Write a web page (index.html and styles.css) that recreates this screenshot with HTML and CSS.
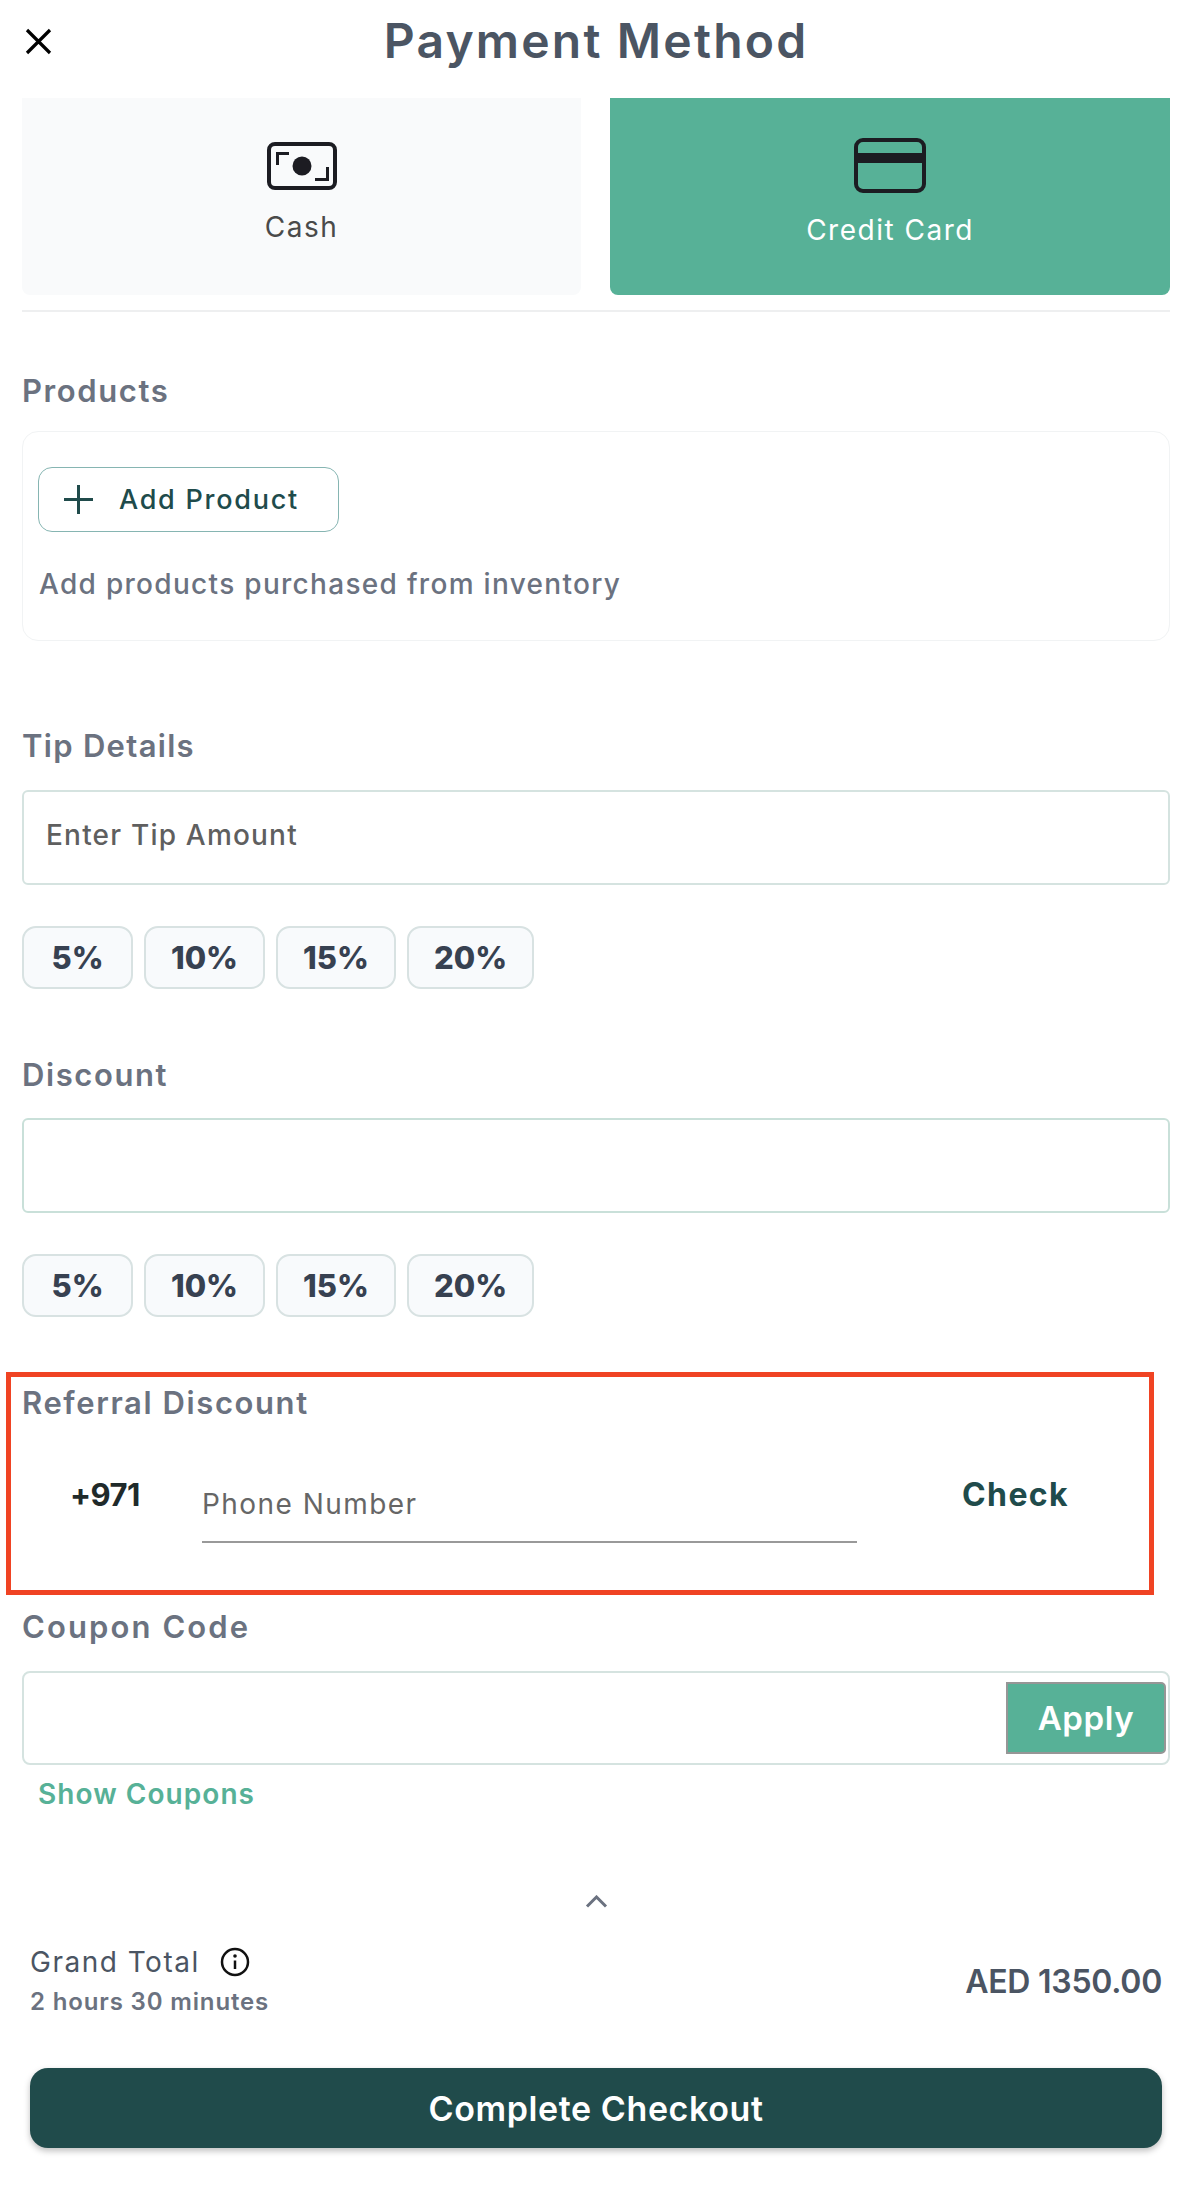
FILE: index.html
```html
<!DOCTYPE html>
<html lang="en">
  <head>
    <meta charset="UTF-8" />
    <title>Payment Method</title>
    <link rel="stylesheet" href="styles.css">
  </head>
  <body>
    <div class="page">
      <div class="top-bar">
        <svg class="close-icon" viewBox="0 0 27 27"><path d="M2 2 L25 25 M25 2 L2 25" /></svg>
        <h1>Payment Method</h1>
      </div>

      <div class="pay-types">
        <div class="pay-type">
          <svg class="cash-icon" viewBox="0 0 70 48">
            <rect x="2" y="2" width="66" height="44" rx="6" />
            <polyline points="22,11.5 10.5,11.5 10.5,23" />
            <polyline points="48,37.5 60.5,37.5 60.5,25" />
            <circle class="solid" cx="35" cy="24" r="9.5" />
          </svg>
          <span>Cash</span>
        </div>
        <div class="pay-type active">
          <svg class="card-icon" viewBox="0 0 72 55">
            <rect x="2" y="2" width="68" height="51" rx="7" />
            <rect class="solid" x="2" y="15" width="68" height="10" />
          </svg>
          <span>Credit Card</span>
        </div>
      </div>
      <div class="divider"></div>

      <h2 class="label products-label">Products</h2>
      <div class="products-box">
        <button class="add-product">
          <svg class="plus-icon" viewBox="0 0 29 29"><path d="M14.5 0 V29 M0 14.5 H29" /></svg>
          Add Product
        </button>
        <p class="helper">Add products purchased from inventory</p>
      </div>

      <h2 class="label tip-label">Tip Details</h2>
      <input class="text-input" type="text" placeholder="Enter Tip Amount" />
      <div class="chips">
        <button class="chip chip-5">5%</button>
        <button class="chip chip-10">10%</button>
        <button class="chip chip-15">15%</button>
        <button class="chip chip-20">20%</button>
      </div>

      <h2 class="label discount-label">Discount</h2>
      <input class="text-input discount-input" type="text" />
      <div class="chips">
        <button class="chip chip-5">5%</button>
        <button class="chip chip-10">10%</button>
        <button class="chip chip-15">15%</button>
        <button class="chip chip-20">20%</button>
      </div>

      <div class="referral">
        <h2 class="label">Referral Discount</h2>
        <div class="referral-row">
          <span class="dial-code">+971</span>
          <input class="phone-input" type="text" placeholder="Phone Number" />
          <span class="check">Check</span>
        </div>
      </div>

      <h2 class="label coupon-label">Coupon Code</h2>
      <div class="coupon-box">
        <input class="coupon-input" type="text" />
        <button class="apply">Apply</button>
      </div>
      <a class="show-coupons">Show Coupons</a>

      <div class="summary">
        <svg class="chevron" viewBox="0 0 23 13"><path d="M2 11.5 L11.5 2 L21 11.5" /></svg>
        <div class="total-row">
          <div>
            <div class="grand-total">
              Grand Total
              <svg class="info-icon" viewBox="0 0 30 30">
                <circle cx="15" cy="15" r="13" />
                <path d="M15 13.5 V22" />
                <circle class="solid" cx="15" cy="9" r="1.8" />
              </svg>
            </div>
            <div class="duration">2 hours 30 minutes</div>
          </div>
          <div class="amount">AED 1350.00</div>
        </div>
        <button class="checkout">Complete Checkout</button>
      </div>
    </div>
  </body>
</html>
```

FILE: styles.css
```css
* {
  padding: 0;
  margin: 0;
  box-sizing: border-box;
}
body {
  background: #fff;
  font-family: Inter, "Noto Sans", sans-serif;
}
button,
input {
  font-family: inherit;
}
svg {
  display: block;
  fill: none;
}
.page {
  width: 1202px;
  padding: 0 32px 44px 22px;
}

/* header */
.top-bar {
  height: 98px;
  position: relative;
  padding-top: 11px;
}
.top-bar h1 {
  font-size: 48px;
  line-height: 60px;
  font-weight: 600;
  color: #4b5563;
  text-align: center;
  letter-spacing: 2.2px;
}
.close-icon {
  position: absolute;
  left: 3px;
  top: 28px;
  width: 27px;
  height: 27px;
  stroke: #000;
  stroke-width: 3.2;
}

/* payment types */
.pay-types {
  display: grid;
  grid-template-columns: 559px 560px;
  gap: 29px;
  height: 197px;
}
.pay-type {
  background: #f9fafb;
  border-radius: 0 0 8px 8px;
  display: flex;
  flex-direction: column;
  align-items: center;
  color: #4a4a4a;
  font-size: 28px;
  line-height: 40px;
  letter-spacing: 1.5px;
  padding-top: 44px;
}
.pay-type.active {
  background: #57b197;
  color: #fff;
  padding-top: 40px;
}
.pay-type svg {
  stroke: #1c1c22;
  stroke-width: 4;
}
.pay-type .solid {
  fill: #1c1c22;
  stroke: none;
}
.cash-icon {
  width: 70px;
  height: 48px;
  margin-bottom: 17px;
}
.cash-icon polyline {
  stroke-width: 3;
}
.card-icon {
  width: 72px;
  height: 55px;
  margin-bottom: 17px;
}
.divider {
  height: 2px;
  background: #eeeff0;
  margin-top: 15px;
}

/* section labels */
.label {
  font-size: 31px;
  line-height: 40px;
  font-weight: 600;
  color: #6b7280;
  letter-spacing: 1.6px;
}
.products-label {
  margin-top: 59px;
}
.tip-label {
  margin-top: 85px;
  letter-spacing: 1.3px;
}
.discount-label {
  margin-top: 66px;
}
.coupon-label {
  margin-top: 12px;
  letter-spacing: 2.1px;
}

/* products */
.products-box {
  height: 210px;
  margin-top: 20px;
  border: 1px solid #f1f3f4;
  border-radius: 16px;
  padding: 35px 15px 0;
}
.add-product {
  width: 301px;
  height: 65px;
  display: flex;
  align-items: center;
  gap: 26px;
  padding-left: 25px;
  background: #fff;
  border: 1px solid #86b5b2;
  border-radius: 14px;
  color: #204b4b;
  font-size: 27px;
  font-weight: 500;
  letter-spacing: 1.75px;
}
.plus-icon {
  width: 29px;
  height: 29px;
  stroke: #204b4b;
  stroke-width: 3;
}
.helper {
  margin-top: 32px;
  margin-left: 1px;
  font-size: 28px;
  line-height: 40px;
  font-weight: 500;
  color: #6b7280;
  letter-spacing: 1.3px;
}

/* inputs and chips */
.text-input {
  display: block;
  width: 100%;
  height: 95px;
  margin-top: 24px;
  padding: 0 0 5px 22px;
  border: 2px solid #d5e3e0;
  border-radius: 6px;
  font-size: 28px;
  font-weight: 500;
  letter-spacing: 1.2px;
}
.text-input::placeholder {
  color: #5f5f5f;
  opacity: 1;
}
.discount-input {
  margin-top: 23px;
  border-color: #c9e0d9;
}
.chips {
  display: flex;
  gap: 11px;
  margin-top: 41px;
}
.chip {
  height: 63px;
  background: #f8fafc;
  border: 2px solid #d8e2e2;
  border-radius: 14px;
  color: #374151;
  font-size: 31px;
  font-weight: 800;
}
.chip-5 {
  width: 111px;
}
.chip-10 {
  width: 121px;
}
.chip-15 {
  width: 120px;
}
.chip-20 {
  width: 127px;
}

/* referral */
.referral {
  width: 1148px;
  height: 223px;
  margin-top: 55px;
  margin-left: -16px;
  border: 5px solid #f04323;
  padding: 6px 0 0 11px;
}
.referral-row {
  display: flex;
  align-items: flex-start;
  margin-top: 52px;
  padding-left: 48px;
}
.dial-code {
  width: 132px;
  font-size: 31px;
  line-height: 40px;
  font-weight: 700;
  color: #1f2a2a;
  letter-spacing: -0.5px;
}
.phone-input {
  width: 655px;
  height: 59px;
  margin-top: 9px;
  padding-bottom: 17px;
  border: none;
  border-bottom: 2px solid #999;
  font-size: 28px;
  line-height: 40px;
  letter-spacing: 1.45px;
}
.phone-input::placeholder {
  color: #666;
  opacity: 1;
}
.check {
  margin-left: 105px;
  font-size: 32px;
  line-height: 40px;
  font-weight: 700;
  color: #204b4b;
  letter-spacing: 1.4px;
}

/* coupon */
.coupon-box {
  height: 94px;
  margin-top: 24px;
  display: flex;
  align-items: center;
  justify-content: space-between;
  padding-right: 2px;
  border: 2px solid #d5e3e0;
  border-radius: 8px;
}
.coupon-input {
  flex: 1;
  height: 60px;
  border: none;
}
.apply {
  width: 160px;
  height: 72px;
  background: #57b197;
  border: 2px solid #969696;
  border-radius: 0 5px 5px 0;
  color: #fff;
  font-size: 33px;
  font-weight: 600;
  letter-spacing: 0.6px;
}
.show-coupons {
  display: block;
  margin: 9px 0 0 16px;
  font-size: 28px;
  line-height: 40px;
  font-weight: 600;
  color: #57b197;
  letter-spacing: 1.05px;
}

/* summary */
.summary {
  padding: 0 8px;
}
.chevron {
  width: 23px;
  height: 13px;
  margin: 81px auto 0;
  stroke: #6b7280;
  stroke-width: 3;
}
.total-row {
  display: flex;
  justify-content: space-between;
  align-items: center;
  margin-top: 34px;
}
.grand-total {
  display: flex;
  align-items: center;
  gap: 20px;
  font-size: 28px;
  line-height: 40px;
  color: #4b5563;
  letter-spacing: 1.5px;
}
.info-icon {
  width: 30px;
  height: 30px;
  stroke: #111;
  stroke-width: 2.5;
}
.info-icon .solid {
  fill: #111;
  stroke: none;
}
.duration {
  margin-top: 2px;
  font-size: 24px;
  line-height: 36px;
  font-weight: 600;
  color: #6b7280;
  letter-spacing: 0.85px;
}
.amount {
  font-size: 32px;
  font-weight: 600;
  color: #4b5563;
  letter-spacing: -0.25px;
}
.checkout {
  display: block;
  width: 100%;
  height: 80px;
  margin-top: 48px;
  background: #204b4b;
  border: none;
  border-radius: 18px;
  color: #fff;
  font-size: 34px;
  font-weight: 600;
  letter-spacing: 0.6px;
  box-shadow: 0 3px 6px rgba(0, 0, 0, 0.25);
}
```
